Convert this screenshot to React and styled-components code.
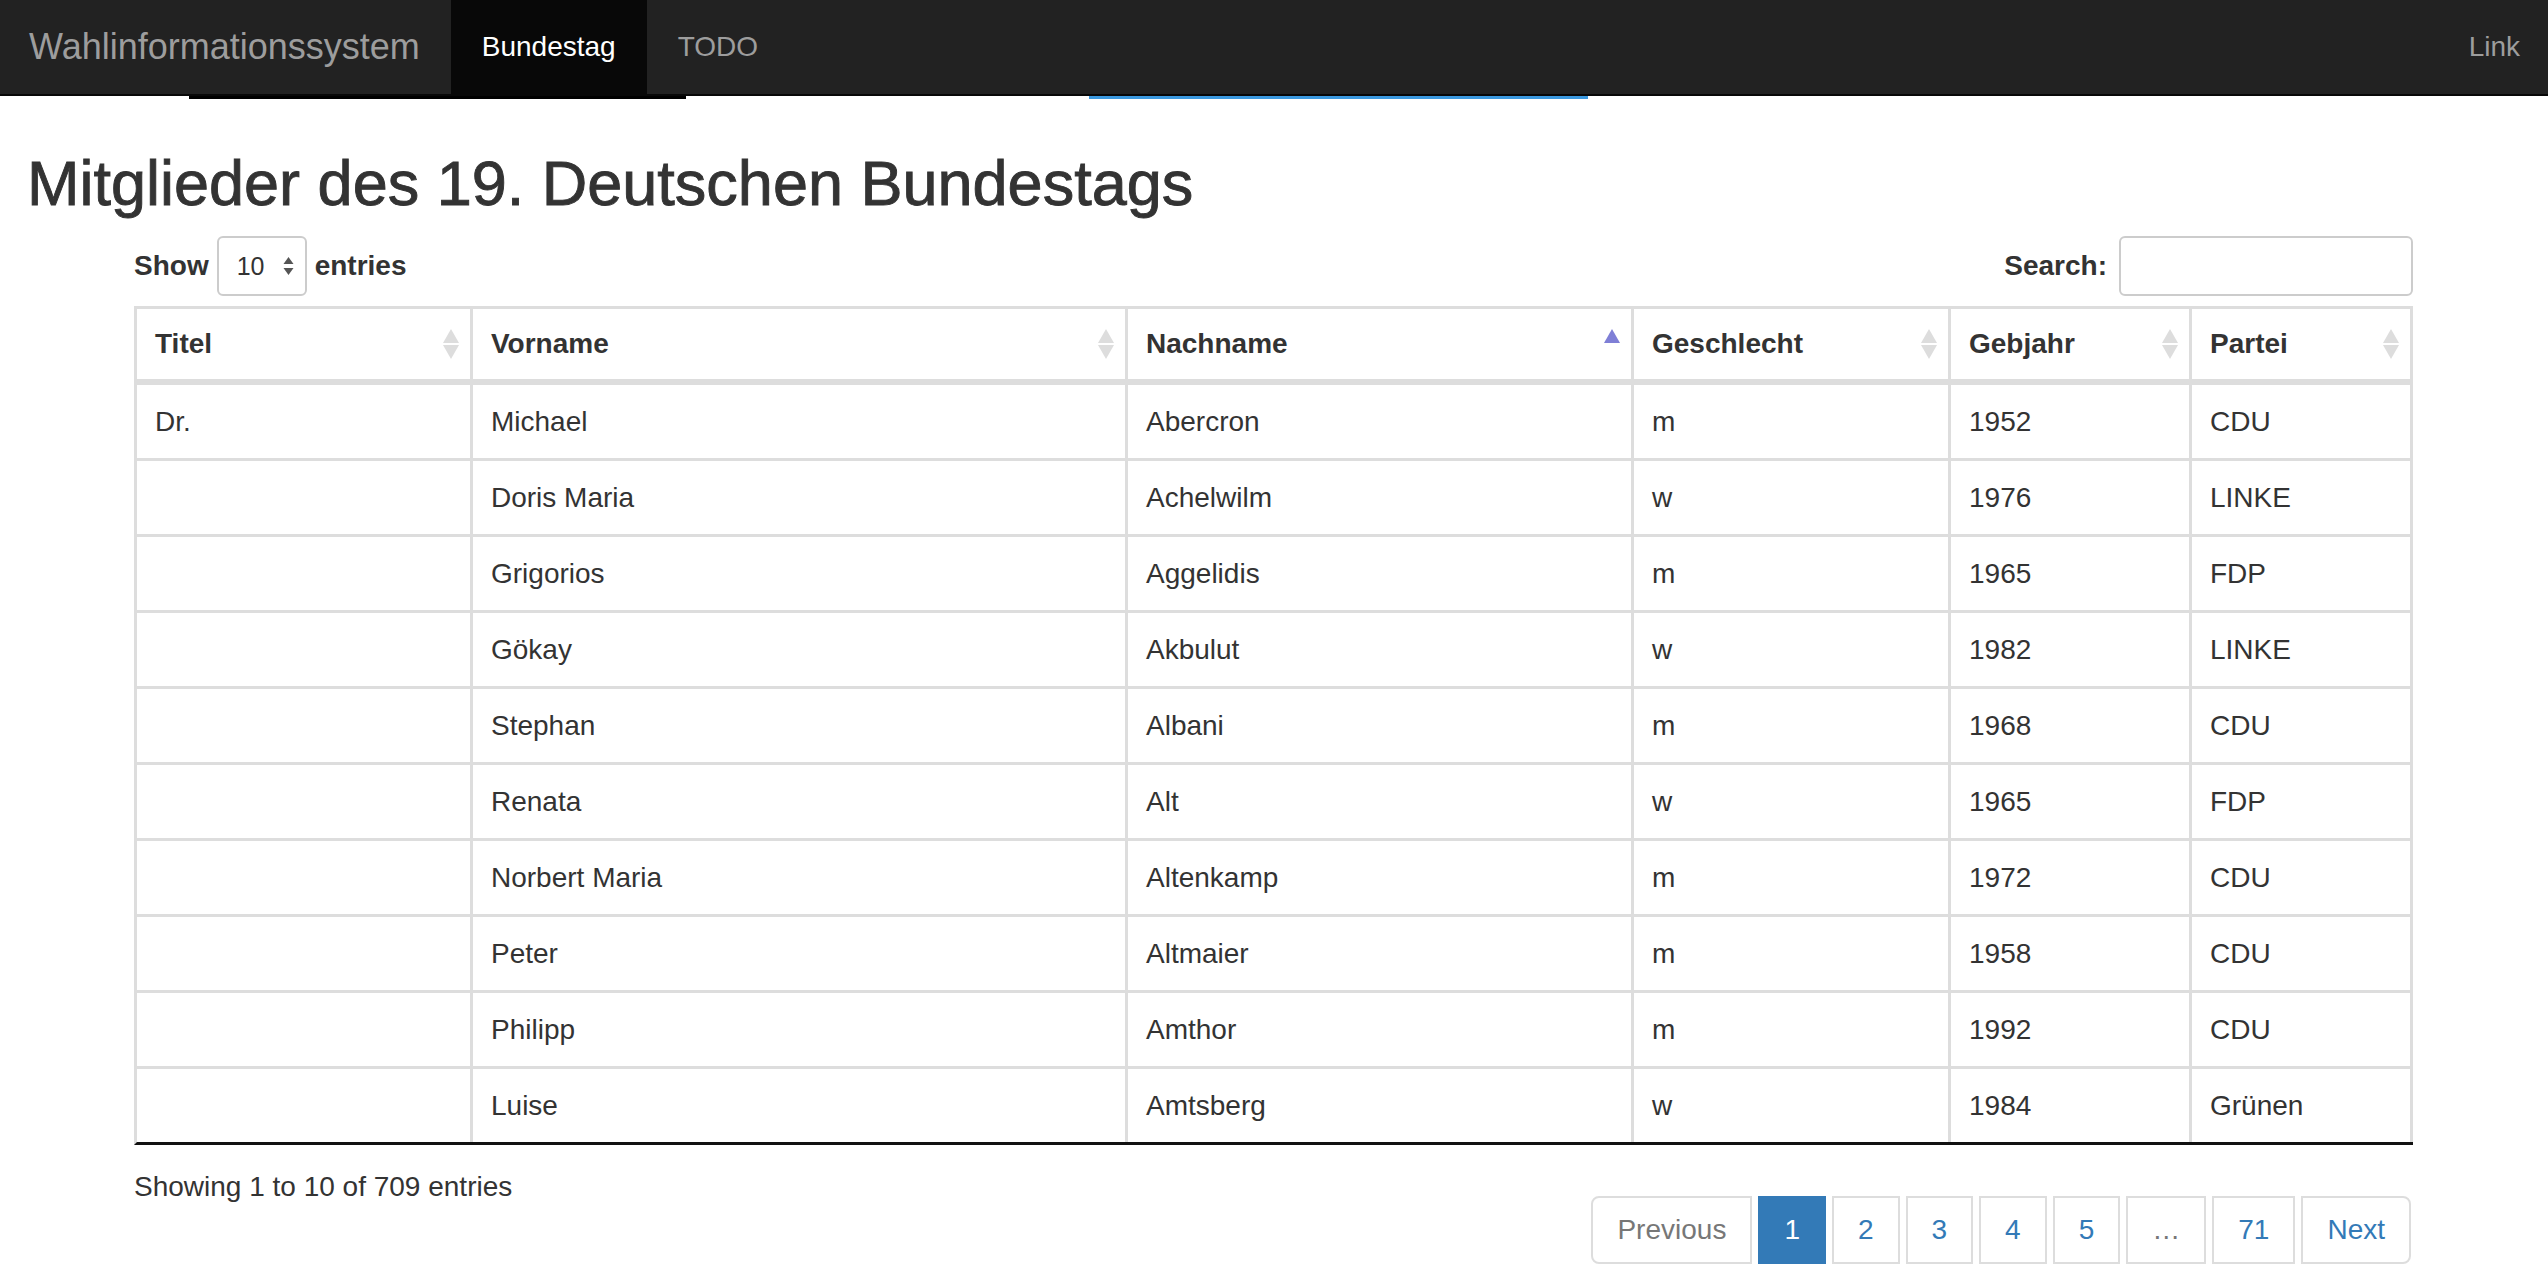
import React from "react";
import styled, { createGlobalStyle } from "styled-components";

const GlobalStyle = createGlobalStyle`
  html, body { margin: 0; padding: 0; background: #fff; }
  body {
    font-family: "Liberation Sans", Arial, Helvetica, sans-serif;
    color: #333;
    font-size: 28px;
    line-height: 40px;
  }
  * { box-sizing: border-box; }
`;

const Page = styled.div`
  width: 2548px;
`;

const Navbar = styled.nav`
  display: flex;
  align-items: stretch;
  height: 96px;
  background: #222;
  border-bottom: 2px solid #080808;
`;

const Brand = styled.a`
  display: flex;
  align-items: center;
  padding: 0 31px 0 29px;
  font-size: 36px;
  color: #9d9d9d;
  text-decoration: none;
`;

const NavList = styled.ul`
  display: flex;
  margin: 0;
  padding: 0;
  list-style: none;
`;

const NavRight = styled(NavList)`
  margin-left: auto;
`;

const NavItem = styled.li`
  display: flex;
  align-items: center;
  padding: ${(p) => (p.$edge ? "0 28px 0 30px" : "0 31px")};
  font-size: 28px;
  color: ${(p) => (p.$active ? "#fff" : "#9d9d9d")};
  background: ${(p) => (p.$active ? "#080808" : "transparent")};
`;

const LoadStrip = styled.div`
  display: grid;
  grid-template-columns: 189px 497px 403px 499px;
  height: 3px;
`;

const StripSeg = styled.div`
  background: ${(p) => p.$color || "transparent"};
`;

const Title = styled.h1`
  margin: 50px 0 0;
  padding-left: 27px;
  font-size: 63px;
  line-height: 68px;
  font-weight: 500;
  color: #333;
  -webkit-text-stroke: 0.9px #333;
`;

const TableSection = styled.section`
  padding: 0 135px 40px 134px;
  margin-top: 19px;
`;

const Controls = styled.div`
  display: flex;
  justify-content: space-between;
  align-items: center;
  height: 60px;
`;

const ControlLabel = styled.label`
  display: flex;
  align-items: center;
  gap: 8px;
  font-weight: bold;
  font-size: 28px;
`;

const SelectBox = styled.div`
  display: flex;
  align-items: center;
  justify-content: space-between;
  width: 90px;
  height: 60px;
  padding: 0 11px 0 18px;
  border: 2px solid #ccc;
  border-radius: 6px;
  font-weight: normal;
  font-size: 25px;
  color: #333;
`;

const SearchInput = styled.input`
  width: 294px;
  height: 60px;
  margin-left: 4px;
  border: 2px solid #ccc;
  border-radius: 6px;
  font-size: 24px;
  padding: 0 12px;
  outline: none;
`;

const Table = styled.table`
  width: 100%;
  margin-top: 10px;
  table-layout: fixed;
  border-collapse: separate;
  border-spacing: 0;
  border-top: 3px solid #ddd;
  border-left: 3px solid #ddd;
  border-bottom: 3px solid #111;
`;

const Th = styled.th`
  position: relative;
  text-align: left;
  font-weight: bold;
  font-size: 28px;
  line-height: 40px;
  padding: 15px 40px 15px 18px;
  border-right: 3px solid #ddd;
  border-bottom: 6px solid #ddd;
  color: #333;
`;

const Td = styled.td`
  font-size: 28px;
  line-height: 40px;
  padding: 17px 18px 16px;
  border-right: 3px solid #ddd;
  border-bottom: ${(p) => (p.$last ? "0" : "3px solid #ddd")};
  color: #333;
  white-space: nowrap;
`;

const SortIcon = styled.svg`
  position: absolute;
  right: 11px;
  top: 50%;
  transform: translateY(-50%);
`;

const Footer = styled.div`
  display: flex;
  justify-content: space-between;
  align-items: flex-start;
  margin-top: 22px;
`;

const Info = styled.div`
  font-size: 28px;
  line-height: 40px;
`;

const Pagination = styled.ul`
  display: flex;
  gap: 6px;
  margin: 29px 2px 0 0;
  padding: 0;
  list-style: none;
`;

const PageBtn = styled.li`
  display: flex;
  align-items: center;
  justify-content: center;
  height: 68px;
  padding: 0 24px;
  font-size: 28px;
  line-height: 40px;
  border: 2px solid ${(p) => (p.$active ? "#337ab7" : "#ddd")};
  background: ${(p) => (p.$active ? "#337ab7" : "#fff")};
  color: ${(p) => (p.$active ? "#fff" : p.$muted ? "#777" : "#337ab7")};
  border-radius: ${(p) =>
    p.$first ? "8px 0 0 8px" : p.$lastItem ? "0 8px 8px 0" : "0"};
`;

const SelectArrows = () => (
  <svg width="11" height="20" viewBox="0 0 11 20">
    <polygon points="5.5,1 10.5,8 0.5,8" fill="#555" />
    <polygon points="0.5,12 10.5,12 5.5,19" fill="#555" />
  </svg>
);

const SortBoth = () => (
  <SortIcon width="16" height="30" viewBox="0 0 16 30">
    <polygon points="8,0 16,14 0,14" fill="#ddd" />
    <polygon points="0,16 16,16 8,30" fill="#ddd" />
  </SortIcon>
);

const SortAsc = () => (
  <SortIcon width="16" height="30" viewBox="0 0 16 30">
    <polygon points="8,0 16,14 0,14" fill="#7f7fd6" />
  </SortIcon>
);

const columns = [
  { label: "Titel", width: 336 },
  { label: "Vorname", width: 655 },
  { label: "Nachname", width: 506, asc: true },
  { label: "Geschlecht", width: 317 },
  { label: "Gebjahr", width: 241 },
  { label: "Partei", width: 221 },
];

const rows = [
  ["Dr.", "Michael", "Abercron", "m", "1952", "CDU"],
  ["", "Doris Maria", "Achelwilm", "w", "1976", "LINKE"],
  ["", "Grigorios", "Aggelidis", "m", "1965", "FDP"],
  ["", "Gökay", "Akbulut", "w", "1982", "LINKE"],
  ["", "Stephan", "Albani", "m", "1968", "CDU"],
  ["", "Renata", "Alt", "w", "1965", "FDP"],
  ["", "Norbert Maria", "Altenkamp", "m", "1972", "CDU"],
  ["", "Peter", "Altmaier", "m", "1958", "CDU"],
  ["", "Philipp", "Amthor", "m", "1992", "CDU"],
  ["", "Luise", "Amtsberg", "w", "1984", "Grünen"],
];

export default function App() {
  return (
    <Page>
      <GlobalStyle />
      <Navbar>
        <Brand>Wahlinformationssystem</Brand>
        <NavList>
          <NavItem $active>Bundestag</NavItem>
          <NavItem>TODO</NavItem>
        </NavList>
        <NavRight>
          <NavItem $edge>Link</NavItem>
        </NavRight>
      </Navbar>
      <LoadStrip>
        <StripSeg />
        <StripSeg $color="#000" />
        <StripSeg />
        <StripSeg $color="#3b99e0" />
      </LoadStrip>
      <Title>Mitglieder des 19. Deutschen Bundestags</Title>
      <TableSection>
        <Controls>
          <ControlLabel>
            Show
            <SelectBox>
              10
              <SelectArrows />
            </SelectBox>
            entries
          </ControlLabel>
          <ControlLabel>
            Search:
            <SearchInput type="search" />
          </ControlLabel>
        </Controls>
        <Table>
          <colgroup>
            {columns.map((c) => (
              <col key={c.label} style={{ width: c.width }} />
            ))}
          </colgroup>
          <thead>
            <tr>
              {columns.map((c) => (
                <Th key={c.label} style={{ width: c.width }}>
                  {c.label}
                  {c.asc ? <SortAsc /> : <SortBoth />}
                </Th>
              ))}
            </tr>
          </thead>
          <tbody>
            {rows.map((r, i) => (
              <tr key={i}>
                {r.map((v, j) => (
                  <Td key={j} $last={i === rows.length - 1}>
                    {v}
                  </Td>
                ))}
              </tr>
            ))}
          </tbody>
        </Table>
        <Footer>
          <Info>Showing 1 to 10 of 709 entries</Info>
          <Pagination>
            <PageBtn $first $muted>Previous</PageBtn>
            <PageBtn $active>1</PageBtn>
            <PageBtn>2</PageBtn>
            <PageBtn>3</PageBtn>
            <PageBtn>4</PageBtn>
            <PageBtn>5</PageBtn>
            <PageBtn $muted>…</PageBtn>
            <PageBtn>71</PageBtn>
            <PageBtn $lastItem>Next</PageBtn>
          </Pagination>
        </Footer>
      </TableSection>
    </Page>
  );
}
